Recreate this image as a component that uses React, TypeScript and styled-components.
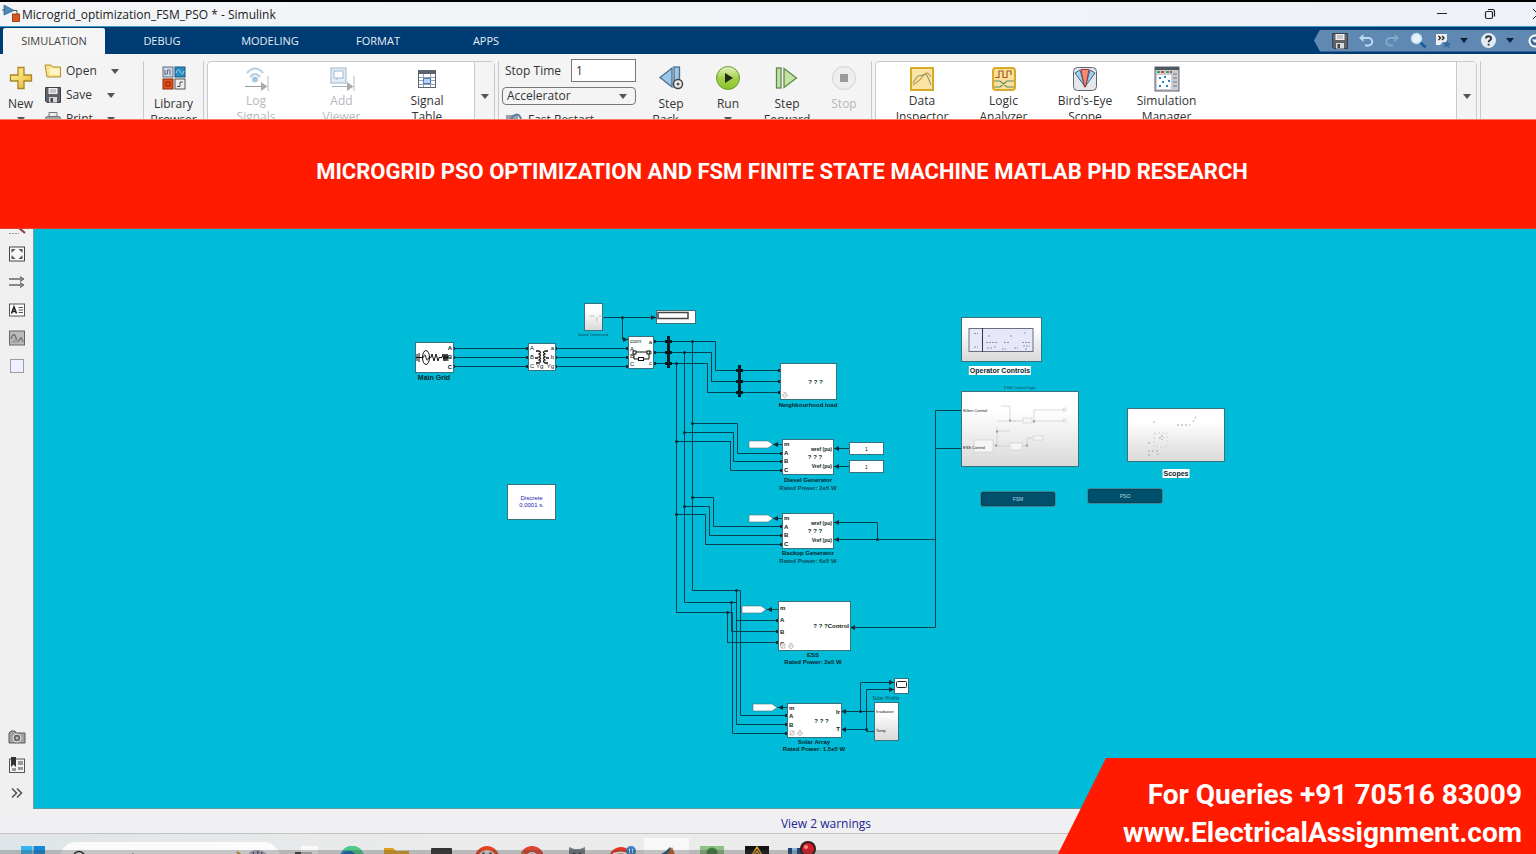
import React from "react";
import styled, { createGlobalStyle } from "styled-components";

/* ---------- model data ---------- */

const ORIGIN = { x: 34, y: 229 };

const WIRES = [
	"M454 348H528M454 357H528M454 366H528M556 348H628M556 357H628M556 366H628",
	"M603 317H656M622 317V339H628",
	"M654 341H715V370H780M654 352H711V381H780M654 363H707V392H780",
	"M692 341V590M684 352V602M676 363V612",
	"M692 423H737V453H782M684 432H733V461H782M676 441H730V470H782",
	"M692 497H713V526H782M684 506H709V535H782M676 514H705V544H782",
	"M692 590H740V715H787M736 590V620H778",
	"M684 602H736V724H787M731 602V631H778",
	"M676 612H732V733H787M727 612V642H778",
	"M771 444H782M771 518H782M766 609H778M777 707H787",
	"M834 448H850M834 466H850M834 522H877V539M834 539H935",
	"M961 410H935V627H850M935 448H961",
	"M841 711H874M860 711V682H894M841 729H866V689H894M866 731H874",
];

const JUNCTIONS = [
	[622, 317], [692, 341], [684, 352], [676, 363], [692, 423], [684, 432], [676, 441],
	[692, 497], [684, 506], [676, 514], [736, 590], [731, 602], [727, 612], [877, 539],
	[860, 711], [866, 729],
];

const ARROWS_LEFT = [
	[834, 448], [834, 466], [834, 522], [834, 539], [850, 627], [841, 711], [841, 729],
	[773, 444], [773, 518], [767, 609], [778, 707],
];

const ARROWS_RIGHT = [[656, 317], [628, 339], [894, 682], [894, 689]];

const PORTS = [
	[454, 348], [454, 357], [454, 366], [528, 348], [528, 357], [528, 366],
	[556, 348], [556, 357], [556, 366], [628, 348], [628, 357], [628, 366],
	[655, 341], [655, 352], [655, 363], [780, 370], [780, 381], [780, 392],
	[782, 453], [782, 461], [782, 470], [782, 526], [782, 535], [782, 544],
	[778, 620], [778, 631], [778, 642], [787, 715], [787, 724], [787, 733],
];

const TERMINATORS = [[749, 444], [749, 518], [742, 609], [753, 707]];

const PHASES = ["m", "A", "B", "C"];

/* ---------- page ---------- */

export default function App() {
	return (
		<>
			<GlobalStyle />
			<Page>
				<TitleBar />
				<TabBar />
				<Toolstrip />
				<Banner>
					<h1>MICROGRID PSO OPTIMIZATION AND FSM FINITE STATE MACHINE MATLAB PHD RESEARCH</h1>
				</Banner>
				<Workspace>
					<Palette />
					<Model />
				</Workspace>
				<StatusBar>
					<a href="#warnings">View 2 warnings</a>
				</StatusBar>
				<Taskbar />
				<Contact>
					<p>For Queries +91 70516 83009</p>
					<p>www.ElectricalAssignment.com</p>
				</Contact>
			</Page>
		</>
	);
}

function TitleBar() {
	return (
		<StyledTitleBar>
			<svg width="18" height="18" viewBox="0 0 18 18">
				<path d="M2 0L12 5.5 2 10z" fill="#4d8db8" stroke="#2b6690" strokeWidth=".8" />
				<path d="M0 5H3M12 5.500H15V9" fill="none" stroke="#555" />
				<rect x="10.500" y="9" width="7" height="7.500" fill="#d9541e" stroke="#8b3210" strokeWidth=".8" />
			</svg>
			<span>Microgrid_optimization_FSM_PSO * - Simulink</span>
			<WindowButtons>
				<button aria-label="Minimize">
					<svg width="12" height="12" viewBox="0 0 12 12"><path d="M1 5.500H11" stroke="#222" /></svg>
				</button>
				<button aria-label="Restore">
					<svg width="12" height="12" viewBox="0 0 12 12" fill="none" stroke="#222" strokeWidth="1.200">
						<rect x="1.500" y="3.500" width="7" height="7" rx="1.500" />
						<path d="M4 1.500H8.500A2 2 0 0 1 10.500 3.500V8.500" />
					</svg>
				</button>
				<button aria-label="Close">
					<svg width="12" height="12" viewBox="0 0 12 12"><path d="M1 1L11 11M11 1L1 11" stroke="#222" /></svg>
				</button>
			</WindowButtons>
		</StyledTitleBar>
	);
}

function TabBar() {
	return (
		<StyledTabBar>
			<Tab $active $width={102}>SIMULATION</Tab>
			<Tab $width={114}>DEBUG</Tab>
			<Tab $width={102}>MODELING</Tab>
			<Tab $width={114}>FORMAT</Tab>
			<Tab $width={102}>APPS</Tab>
			<QuickAccess>
				<QuickButton $width={27} aria-label="Save"><FloppyIcon /></QuickButton>
				<QuickButton $width={26} aria-label="Undo">
					<svg width="16" height="16" viewBox="0 0 16 16" fill="none">
						<path d="M4 5H10.500A3.500 3.500 0 0 1 10.500 12.500H7" stroke="#b9dcf2" strokeWidth="2" />
						<path d="M5.500 1V9L1 5z" fill="#b9dcf2" />
					</svg>
				</QuickButton>
				<QuickButton $width={26} aria-label="Redo">
					<svg width="16" height="16" viewBox="0 0 16 16" fill="none">
						<path d="M12 5H6A3.500 3.500 0 0 0 6 12.500H9" stroke="#83a9c8" strokeWidth="2" />
						<path d="M10.500 1V9L15 5z" fill="#83a9c8" />
					</svg>
				</QuickButton>
				<QuickButton $width={27} aria-label="Search">
					<svg width="17" height="17" viewBox="0 0 17 17">
						<path d="M10 10L15.500 15.500" stroke="#1d5c9c" strokeWidth="2.500" />
						<circle cx="6.500" cy="6.500" r="5" fill="#e6f2fa" stroke="#c2ddee" strokeWidth="1.500" />
					</svg>
				</QuickButton>
				<QuickButton $width={22} aria-label="Shortcuts">
					<svg width="16" height="16" viewBox="0 0 16 16">
						<path d="M1 1H12V9H8L5 12H1z" fill="#eee" />
						<path d="M3.500 3L5.500 5 3.500 7M7 3L9 5 7 7" fill="none" stroke="#222" strokeWidth="1.300" />
						<path d="M12 7L13.300 10H16L14 12L15 15L12 13.500L9 15L10 12L8 10H10.700z" fill="#37699c" />
					</svg>
				</QuickButton>
				<QuickButton $width={19} aria-label="More shortcuts"><Caret $color="#0d2238" /></QuickButton>
				<QuickButton $width={30} aria-label="Help">
					<svg width="17" height="17" viewBox="0 0 17 17">
						<circle cx="8.500" cy="8.500" r="7.500" fill="#e4eaf0" />
						<path d="M6 6.500C6 3.500 11.200 3.500 11.200 6.400C11.200 8.300 8.600 8.300 8.600 10.300M8.600 11.800V13.500" fill="none" stroke="#26333f" strokeWidth="1.800" />
					</svg>
				</QuickButton>
				<QuickButton $width={13} aria-label="More help"><Caret $color="#0d2238" /></QuickButton>
				<QuickButton $width={37} aria-label="Minimize toolstrip">
					<svg width="14" height="14" viewBox="0 0 14 14">
						<circle cx="7" cy="7" r="5.500" fill="#3f6e9d" stroke="#fff" strokeWidth="2" />
						<path d="M4 5.500H10L7 9z" fill="#fff" />
					</svg>
				</QuickButton>
			</QuickAccess>
		</StyledTabBar>
	);
}

function Toolstrip() {
	return (
		<StyledToolstrip>
			<Tool $width={41}>
				<svg width="24" height="24" viewBox="0 0 24 24">
					<path d="M9 1.500H15V9H22.500V15H15V22.500H9V15H1.500V9H9z" fill="url(#gold)" stroke="#a98526" strokeWidth="1.300" />
					<defs>
						<linearGradient id="gold" x1="0" y1="0" x2="1" y2="1">
							<stop offset="0" stopColor="#fff4a8" />
							<stop offset="1" stopColor="#e9b82b" />
						</linearGradient>
					</defs>
				</svg>
				<span>New</span>
				<Caret />
			</Tool>
			<FileMenu>
				<FileButton $label={45}><FolderIcon /><span>Open</span><Caret /></FileButton>
				<FileButton $label={41}><FloppyIcon /><span>Save</span><Caret /></FileButton>
				<FileButton $label={41}><PrinterIcon /><span>Print</span><Caret /></FileButton>
			</FileMenu>
			<Separator />
			<Tool $width={53}>
				<svg width="24" height="24" viewBox="0 0 24 24">
					<rect x="1" y="1" width="10" height="10" fill="#cfd5e6" stroke="#626a7e" />
					<path d="M3 9V4M3 8H5.500V4H8V9" fill="none" stroke="#626a7e" />
					<rect x="13" y="1" width="10" height="10" fill="#2b8cc0" stroke="#17567c" />
					<path d="M14 7C16 2 17.500 4 18.500 6S21 9 22 5" fill="none" stroke="#a7dcf4" />
					<rect x="1" y="13" width="10" height="10" fill="#e2511c" stroke="#8c2d0b" />
					<rect x="4" y="16" width="4" height="4" fill="none" stroke="#8c2d0b" />
					<rect x="13" y="13" width="10" height="10" fill="#eee" stroke="#555" />
					<path d="M15 20.500H18V16H21" fill="none" stroke="#555" />
				</svg>
				<span>Library<br />Browser</span>
			</Tool>
			<Separator />
			<Gallery>
				<Tool $width={86} $compact disabled>
					<svg width="26" height="26" viewBox="0 0 26 26" fill="none">
						<path d="M4 7Q12 -2 20 7M7 11Q12 5 17 11" stroke="#b5cfe0" strokeWidth="2" />
						<circle cx="12" cy="13.500" r="3" fill="#a6c7de" />
						<path d="M2 20.500H18" stroke="#999" />
						<path d="M18 16L24.500 20.500L18 25z" fill="#aaa" />
						<path d="M25 10V25" stroke="#bbb" />
					</svg>
					<span>Log<br />Signals</span>
				</Tool>
				<Tool $width={85} $compact disabled>
					<svg width="26" height="26" viewBox="0 0 26 26" fill="none">
						<rect x="2" y="2" width="15" height="15" fill="#e5eef7" stroke="#9cb8cf" />
						<rect x="5" y="5" width="9" height="7" fill="#fff" stroke="#9cb8cf" />
						<path d="M8 12V14M3 20.500H18" stroke="#a5b5c2" />
						<path d="M18 16L24.500 20.500L18 25z" fill="#aaa" />
						<path d="M25 10V25" stroke="#bbb" />
					</svg>
					<span>Add<br />Viewer</span>
				</Tool>
				<Tool $width={86} $compact>
					<svg width="20" height="26" viewBox="0 0 20 26">
						<rect x="1.500" y="4.500" width="17" height="17" fill="#fff" stroke="#5c6470" />
						<rect x="1" y="4" width="18" height="4" fill="#5c6470" />
						<path d="M2 11.500H18M2 14.500H18M2 18.500H18M6.500 8V21M13.500 8V21" stroke="#92a0b0" />
						<rect x="6.500" y="12.500" width="7" height="5" fill="#b6d2f5" stroke="#4b7cc0" />
					</svg>
					<span>Signal<br />Table</span>
				</Tool>
				<MoreButton aria-label="More prepare tools"><Caret /></MoreButton>
			</Gallery>
			<Separator />
			<Settings>
				<div>
					<label htmlFor="stop">Stop Time</label>
					<input id="stop" defaultValue="1" />
				</div>
				<SelectBox>
					<select aria-label="Simulation mode" defaultValue="Accelerator">
						<option>Accelerator</option>
					</select>
					<Caret />
				</SelectBox>
				<FastRestart>
					<svg width="18" height="14" viewBox="0 0 18 14">
						<rect x="1" y="2" width="12" height="10" fill="#9aa0aa" />
						<path d="M6 7C8 0 14 0 16 6" fill="none" stroke="#5d7ea4" strokeWidth="2" />
					</svg>
					Fast Restart
				</FastRestart>
			</Settings>
			<Tool $width={62}>
				<svg width="26" height="26" viewBox="0 0 26 26">
					<path d="M2 12.500L14 3V22z" fill="#9cc6e8" stroke="#4d6e8b" strokeWidth="1.300" />
					<rect x="16" y="2" width="5.500" height="20" fill="#9cc6e8" stroke="#4d6e8b" strokeWidth="1.300" />
					<circle cx="20" cy="19" r="4.500" fill="#eee" stroke="#444" strokeWidth="1.500" />
					<circle cx="20" cy="19" r="1.500" fill="#555" />
				</svg>
				<span>Step<br />Back <Caret /></span>
			</Tool>
			<Tool $width={52}>
				<svg width="26" height="26" viewBox="0 0 26 26">
					<circle cx="13" cy="13" r="11.500" fill="url(#run)" stroke="#6c9a37" />
					<path d="M10 8L18 13L10 18z" fill="#1e2b14" />
					<defs>
						<linearGradient id="run" x1="0" y1="0" x2="0" y2="1">
							<stop offset="0" stopColor="#e6f3c8" />
							<stop offset=".5" stopColor="#a5d14b" />
							<stop offset="1" stopColor="#8cc22e" />
						</linearGradient>
					</defs>
				</svg>
				<span>Run</span>
				<Caret />
			</Tool>
			<Tool $width={66}>
				<svg width="26" height="26" viewBox="0 0 26 26">
					<rect x="2.500" y="3" width="4.500" height="20" fill="#c3e3a5" stroke="#5d8a4a" strokeWidth="1.300" />
					<path d="M10 3.500L22.500 13L10 22.500z" fill="#c3e3a5" stroke="#5d8a4a" strokeWidth="1.300" />
				</svg>
				<span>Step<br />Forward</span>
			</Tool>
			<Tool $width={48} disabled>
				<svg width="26" height="26" viewBox="0 0 26 26">
					<circle cx="13" cy="13" r="11.500" fill="#eee" stroke="#d2d2d2" />
					<rect x="9" y="9" width="8" height="8" fill="#9b9b9b" />
				</svg>
				<span>Stop</span>
			</Tool>
			<Separator />
			<Gallery $grow>
				<Tool $width={82} $compact>
					<svg width="26" height="26" viewBox="0 0 26 26">
						<rect x="2" y="2" width="22" height="22" fill="#fbe5a4" stroke="#d9a928" strokeWidth="2" />
						<path d="M4 17C10 6 11 11 14 9S18 8 22 19" fill="none" stroke="#8d9e72" strokeWidth="1.200" />
						<path d="M4 19C8 16 11 15 14 10S20 7 22 11" fill="none" stroke="#c49a4a" strokeWidth="1.200" />
					</svg>
					<span>Data<br />Inspector</span>
				</Tool>
				<Tool $width={81} $compact>
					<svg width="26" height="26" viewBox="0 0 26 26">
						<rect x="2" y="2" width="22" height="22" rx="3" fill="#fbe09a" stroke="#d9a928" strokeWidth="2" />
						<path d="M4 11.500H8V5H12V11.500H16V5H20V9" fill="none" stroke="#a5582d" strokeWidth="1.200" />
						<path d="M3 15H9L16 21H23M3 21H9L16 15H23" fill="none" stroke="#5c8c6c" strokeWidth="1.200" />
					</svg>
					<span>Logic<br />Analyzer</span>
				</Tool>
				<Tool $width={82} $compact>
					<svg width="26" height="26" viewBox="0 0 26 26">
						<rect x="1.500" y="1.500" width="23" height="23" rx="4" fill="#e4e7ec" stroke="#5f6672" />
						<path d="M3 7L8 4L12.500 20z" fill="#9fd0ee" stroke="#33678c" />
						<path d="M23 7L18 4L13.500 20z" fill="#9fd0ee" stroke="#33678c" />
						<path d="M9 3.500H17L13.500 21H12.500z" fill="#f08c78" stroke="#a6332c" />
					</svg>
					<span>Bird's-Eye<br />Scope</span>
				</Tool>
				<Tool $width={81} $compact>
					<svg width="26" height="26" viewBox="0 0 26 26">
						<rect x="1" y="1" width="24" height="24" fill="#c9ccd0" stroke="#5c636b" />
						<rect x="1" y="1" width="24" height="3" fill="#4f5962" />
						<path d="M3 6H6M12 6H15" stroke="#3ba95c" strokeWidth="2" />
						<path d="M7 6H10M16 6H18" stroke="#cf4747" strokeWidth="2" />
						<rect x="3" y="9" width="14" height="14" fill="#fff" />
						<path d="M5 11h2v2h-2zM10 10h2v2h-2zM14 14h2v2h-2zM8 15h2v2h-2zM5 19h2v2h-2zM12 19h2v2h-2z" fill="#2781c4" />
						<path d="M19 8H23M19 12H23M19 16H23M19 20H23" stroke="#777" />
					</svg>
					<span>Simulation<br />Manager</span>
				</Tool>
				<MoreButton aria-label="More review tools"><Caret /></MoreButton>
			</Gallery>
			<Separator />
		</StyledToolstrip>
	);
}

function FolderIcon() {
	return (
		<svg width="18" height="16" viewBox="0 0 18 16">
			<path d="M1 2H7L9 4H16.500V14H3z" fill="#f9e088" stroke="#b08e32" />
			<path d="M5 5.500H15.500V12H6z" fill="#fff6c8" />
		</svg>
	);
}

function FloppyIcon() {
	return (
		<svg width="18" height="18" viewBox="0 0 18 18">
			<path d="M1.500 1.500H16.500V16.500H3L1.500 15z" fill="#5f6369" stroke="#3e4146" />
			<rect x="4.500" y="2" width="9" height="6" fill="#f0f0f0" />
			<path d="M6 4H12M6 6H12" stroke="#999" />
			<rect x="5" y="11" width="8" height="5.500" fill="#d8d8d8" />
			<rect x="6.500" y="12" width="2.500" height="4" fill="#444" />
		</svg>
	);
}

function PrinterIcon() {
	return (
		<svg width="18" height="16" viewBox="0 0 18 16">
			<path d="M5 6V1.500H13V6" fill="#eee" stroke="#777" />
			<rect x="1.500" y="5.500" width="15" height="8" rx="2" fill="#a3a6aa" stroke="#6c6f73" />
		</svg>
	);
}

function Palette() {
	return (
		<StyledPalette>
			<div>
				<PaletteButton $clipped aria-label="Zoom">
					<svg width="18" height="18" viewBox="0 0 18 18"><path d="M1 16.500H11" stroke="#999" strokeDasharray="2 1" /><path d="M11 11L17 16" stroke="#8b3a32" strokeWidth="2" /></svg>
				</PaletteButton>
				<PaletteButton aria-label="Fit to view">
					<svg width="18" height="18" viewBox="0 0 18 18">
						<rect x="1.500" y="2" width="15" height="14" fill="#fafafa" stroke="#444" />
						<path d="M3.500 4H7.500L3.500 8zM14.500 4H10.500L14.500 8zM3.500 14H7.500L3.500 10zM14.500 14H10.500L14.500 10z" fill="#555" />
					</svg>
				</PaletteButton>
				<PaletteButton aria-label="Signal routing">
					<svg width="18" height="18" viewBox="0 0 18 18">
						<path d="M1 6H14M1 12H14" stroke="#666" strokeWidth="1.300" />
						<path d="M12 3.500L16 6L12 8.500M12 9.500L16 12L12 14.500" fill="#888" stroke="#666" />
					</svg>
				</PaletteButton>
				<PaletteButton aria-label="Annotation">
					<svg width="18" height="18" viewBox="0 0 18 18">
						<rect x="1.500" y="3" width="15" height="12" fill="#fff" stroke="#555" />
						<path d="M3.500 12.500L6 6L8.500 12.500M4.500 10.500H7.500" fill="none" stroke="#222" strokeWidth="1.600" />
						<path d="M10.500 6.500H15M10.500 9H15M10.500 11.500H15" stroke="#555" />
					</svg>
				</PaletteButton>
				<PaletteButton aria-label="Image">
					<svg width="18" height="18" viewBox="0 0 18 18">
						<rect x="1.500" y="2" width="15" height="14" fill="#bbb" stroke="#666" />
						<path d="M3 10C5 4 7 5 8 9S11 13 12 10S14 10 15 13" fill="none" stroke="#6f6f6f" strokeWidth="1.300" />
						<path d="M3 14L7 9L12 14z" fill="#a2a2a2" />
					</svg>
				</PaletteButton>
				<PaletteButton aria-label="Area">
					<svg width="18" height="18" viewBox="0 0 18 18"><rect x="2.500" y="2.500" width="13" height="13" fill="#eef0ff" stroke="#9a9cab" /></svg>
				</PaletteButton>
			</div>
			<div>
				<PaletteButton aria-label="Screenshot">
					<svg width="18" height="18" viewBox="0 0 18 18">
						<path d="M1 5L3 3H7L8 5H17V15H1z" fill="#a2a2a2" stroke="#5a5a5a" />
						<circle cx="9" cy="10" r="4" fill="#666" stroke="#eee" />
						<circle cx="9" cy="10" r="1.500" fill="#bbb" />
					</svg>
				</PaletteButton>
				<PaletteButton aria-label="Bookmarks">
					<svg width="18" height="18" viewBox="0 0 18 18">
						<rect x="1.500" y="3" width="15" height="13.500" fill="#f2f2f2" stroke="#555" />
						<path d="M3 1H8V11L5.500 8.500L3 11z" fill="#333" />
						<path d="M10 5h5v4h-5zM10 11h5v3h-5zM4 12h4v3h-4z" fill="#999" />
					</svg>
				</PaletteButton>
				<PaletteButton aria-label="Show more">
					<svg width="18" height="18" viewBox="0 0 18 18"><path d="M4 4.500L8.500 9L4 13.500M9 4.500L13.500 9L9 13.500" fill="none" stroke="#555" strokeWidth="1.600" /></svg>
				</PaletteButton>
			</div>
		</StyledPalette>
	);
}

function Model() {
	return (
		<Canvas>
			<Wires viewBox="34 229 1502 580" width="1502" height="580">
				<g fill="none" stroke="#06404e" strokeWidth="1" transform="translate(.5 .5)">
					{WIRES.map((d) => <path key={d} d={d} />)}
				</g>
				<g fill="#032c36">
					{JUNCTIONS.map(([x, y]) => <circle key={`${x}-${y}`} cx={x + 0.5} cy={y + 0.5} r="1.500" />)}
					{ARROWS_LEFT.map(([x, y]) => <path key={`${x}-${y}`} d={`M${x} ${y + 0.5}l5 -2.500v5z`} />)}
					{ARROWS_RIGHT.map(([x, y]) => <path key={`${x}-${y}`} d={`M${x} ${y + 0.5}l-5 -2.500v5z`} />)}
					{PORTS.map(([x, y]) => <rect key={`${x}-${y}`} x={x - 2} y={y - 1} width="3" height="3" />)}
				</g>
				<g fill="#fff" stroke="#467580" strokeWidth=".6">
					{TERMINATORS.map(([x, y]) => <path key={y} d={`M${x} ${y - 3}h19l5 3.500l-5 3.500h-19z`} />)}
				</g>
				<path d="M668.500 336V368M739.500 365V397" stroke="#02191f" strokeWidth="3" />
				<path d="M665 341.500H672M665 352.500H672M665 363.500H672M736 370.500H743M736 381.500H743M736 392.500H743" stroke="#02191f" strokeWidth="3" />
			</Wires>

			<Block $x={415} $y={342} $w={39} $h={31}>
				<svg width="37" height="29" viewBox="0 0 37 29" fill="none" stroke="#111">
					<path d="M0 14.500H7M1 11V18M3 10V19M13 14.500H15L16 11L18 18L20 11L22 18L23 14.500H26L27 11L28 18L29 11L30 18L31 11L32 18" />
					<ellipse cx="10" cy="14.500" rx="3.500" ry="7" />
					<path d="M7.500 14.500Q9 9 10 14.500T12.500 14.500" />
				</svg>
				<Ports $side="right"><b>A</b><b>B</b><b>C</b></Ports>
			</Block>
			<Caption $x={434} $y={373} $size={7}>Main Grid</Caption>

			<Block $x={528} $y={343} $w={28} $h={28}>
				<svg width="26" height="26" viewBox="0 0 26 26" fill="none" stroke="#111" strokeWidth="1.300">
					<path d="M6 14H9M20 14H17M7 7H10Q13 8 10 10Q13 11 10 13Q13 14 10 16Q13 17 10 19H7M19 7H16Q13 8 16 10Q13 11 16 13Q13 14 16 16Q13 17 16 19H19" />
				</svg>
				<Ports $side="left"><span>A</span><span>B</span><span>C Yg</span></Ports>
				<Ports $side="right"><span>a</span><span>b</span><span>Yg</span></Ports>
			</Block>

			<Block $x={628} $y={336} $w={26} $h={33}>
				<svg width="24" height="31" viewBox="0 0 24 31" fill="none" stroke="#111">
					<path d="M5 17V22H10M15 22H20V17M6 15H19" />
					<rect x="4" y="14" width="3" height="3" fill="#fff" />
					<rect x="18" y="14" width="3" height="3" fill="#fff" />
					<rect x="9.500" y="20.500" width="5" height="3" fill="#fff" />
				</svg>
				<Ports $side="left"><span>com</span><span>A</span><span>B</span><span>C</span></Ports>
				<Ports $side="right"><span>a</span><span>b</span><span>c</span></Ports>
			</Block>

			<Block $x={584} $y={303} $w={19} $h={28} $shaded>
				<svg width="17" height="26" viewBox="0 0 17 26" fill="none" stroke="#bbb">
					<path d="M5 12H9M12 13V17M14 12H16" />
				</svg>
			</Block>
			<Caption $x={593} $y={332} $size={4} $light>Island Command</Caption>
			<Block $x={656} $y={310} $w={40} $h={14}>
				<svg width="38" height="12" viewBox="0 0 38 12"><rect x="1" y="1.500" width="30" height="6" fill="#fff" stroke="#444" strokeWidth="1.500" /></svg>
			</Block>

			<Block $x={780} $y={363} $w={57} $h={37}>
				<Mask $shift={14}>? ? ?</Mask>
				<Badge><DownIcon /></Badge>
			</Block>
			<Caption $x={808} $y={401} $size={6}>Neighbourhood load</Caption>

			<Machine y={439} />
			<Caption $x={808} $y={476} $size={6}>Diesel Generator</Caption>
			<Caption $x={808} $y={484} $size={6} $light>Rated Power: 2e5 W</Caption>
			<Block $x={849} $y={442} $w={35} $h={13}><Constant>1</Constant></Block>
			<Block $x={849} $y={460} $w={35} $h={13}><Constant>1</Constant></Block>

			<Machine y={513} />
			<Caption $x={808} $y={549} $size={6}>Backup Generator</Caption>
			<Caption $x={808} $y={557} $size={6} $light>Rated Power: 6e5 W</Caption>

			<Block $x={778} $y={601} $w={73} $h={50}>
				<Ports $side="left">{PHASES.map((p) => <b key={p}>{p}</b>)}</Ports>
				<Mask $shift={12}>? ? ?</Mask>
				<Ports $side="right"><b>Control</b></Ports>
				<Badge><LinkIcon /><DownIcon /></Badge>
			</Block>
			<Caption $x={813} $y={651} $size={6}>ESS</Caption>
			<Caption $x={813} $y={658} $size={6}>Rated Power: 2e5 W</Caption>

			<Block $x={787} $y={703} $w={55} $h={35}>
				<Ports $side="left">{PHASES.slice(0, 3).map((p) => <b key={p}>{p}</b>)}<b>&nbsp;</b></Ports>
				<Mask $shift={14}>? ? ?</Mask>
				<Ports $side="right"><b>Ir</b><b>T</b></Ports>
				<Badge><LinkIcon /><DownIcon /></Badge>
			</Block>
			<Caption $x={814} $y={738} $size={6}>Solar Array</Caption>
			<Caption $x={814} $y={745} $size={6}>Rated Power: 1.5e5 W</Caption>

			<Block $x={894} $y={678} $w={15} $h={16}>
				<svg width="13" height="14" viewBox="0 0 13 14"><rect x="1.500" y="2.500" width="10" height="6" rx="1" fill="#fff" stroke="#222" /></svg>
			</Block>
			<Caption $x={886} $y={695} $size={5} $light>Solar Profile</Caption>
			<Block $x={874} $y={702} $w={25} $h={39} $shaded>
				<Ports $side="left" $small><span>Irradiation</span><span>Temp</span></Ports>
			</Block>

			<Block $x={507} $y={484} $w={49} $h={36}>
				<Discrete>Discrete<br />0.0001 s.</Discrete>
			</Block>

			<Block $x={961} $y={317} $w={81} $h={45} $shaded>
				<svg width="79" height="43" viewBox="0 0 79 43" fill="none">
					<rect x="7" y="10.500" width="64" height="23" fill="#e6e8fa" stroke="#6b6d80" />
					<path d="M20.500 10V34" stroke="#333" />
					<path d="M12 15.500H16M12 29H16M24 24.500H35M42 24.500H48M60 24.500H68M26 18H29M48 18H51M62 15.500L64 14M25 30H30M33 28V31M40 31H44M52 30H56M61 28H68M63 31H66" stroke="#8d90a8" strokeDasharray="2 1" />
				</svg>
			</Block>
			<Caption $x={1000} $y={366} $size={7} $boxed>Operator Controls</Caption>

			<Caption $x={1020} $y={385} $size={4} $light>FSM Control logic</Caption>
			<Block $x={961} $y={391} $w={118} $h={76} $shaded>
				<svg width="116" height="74" viewBox="0 0 116 74" fill="none" stroke="#c4c4c4">
					<path d="M39 14H48V29H103M72 29V18H103M35 29H54M35 35V54M35 39H48M35 54H47M60 54H65V46H70" strokeWidth=".6" />
					<path d="M47 28.500H49M34 39.500H36M33 53.500H35M71 29.500H73M64 53.500H66" stroke="#999" strokeWidth="2" />
					<g fill="#f5f5f5" strokeWidth=".5">
						<rect x="61" y="26" width="9" height="5" />
						<rect x="101" y="16" width="3" height="3" />
						<rect x="101" y="27" width="3" height="3" />
						<rect x="12" y="48" width="19" height="12" />
						<rect x="48" y="51" width="12" height="7" />
						<rect x="71" y="44" width="10" height="4" />
					</g>
				</svg>
				<Ports $side="left" $small><span>BGen Control</span><span>ESS Control</span></Ports>
			</Block>

			<Block $x={1127} $y={408} $w={98} $h={54} $shaded>
				<svg width="96" height="52" viewBox="0 0 96 52" fill="none" stroke="#a5a5a5" strokeDasharray="2 2">
					<path d="M25 13H28M49 16H62M65 13L69 6M20 34H24M31 29H36M34 26V31M20 42H26M20 46H23M28 42H32M29 46L31 44" />
					<rect x="26" y="24" width="13" height="14" stroke="#d2d2d2" />
				</svg>
			</Block>
			<Caption $x={1176} $y={469} $size={7} $boxed>Scopes</Caption>

			<ModelButton $x={980} $y={491}>FSM</ModelButton>
			<ModelButton $x={1087} $y={488}>PSO</ModelButton>
		</Canvas>
	);
}

function Machine({ y }: { y: number }) {
	return (
		<Block $x={782} $y={y} $w={52} $h={36}>
			<Ports $side="left">{PHASES.map((p) => <b key={p}>{p}</b>)}</Ports>
			<Mask $shift={14}>? ? ?</Mask>
			<Ports $side="right" $medium><b>wref (pu)</b><b>Vref (pu)</b></Ports>
		</Block>
	);
}

function DownIcon() {
	return <svg width="6" height="6" viewBox="0 0 6 6"><path d="M2 0H4V3H6L3 6L0 3H2z" fill="#eee" stroke="#999" strokeWidth=".5" /></svg>;
}

function LinkIcon() {
	return <svg width="6" height="6" viewBox="0 0 6 6"><path d="M1 1H5V5H1zM1 5L5 1" fill="#fff" stroke="#a99" strokeWidth=".6" /></svg>;
}

function Taskbar() {
	return (
		<StyledTaskbar>
			<TaskButton $width={60} aria-label="Start">
				<svg width="24" height="24" viewBox="0 0 24 24"><path d="M0 0H11.500V11.500H0z" fill="#35b4ee" /><path d="M12.500 0H24V11.500H12.500z" fill="#1287d8" /></svg>
			</TaskButton>
			<SearchBox>
				<svg width="16" height="16" viewBox="0 0 16 16"><circle cx="7" cy="7" r="5.500" fill="none" stroke="#222" strokeWidth="1.500" /><path d="M11 11L15 15" stroke="#222" strokeWidth="1.500" /></svg>
				<input aria-label="Search" placeholder="Search" />
				<svg width="34" height="16" viewBox="0 0 34 16">
					<path d="M1 2L6 6" stroke="#c2891a" strokeWidth="2" />
					<path d="M11 9C11 2 17 0 21 0C28 0 32 4 33 10V16H13z" fill="#b9b4cb" />
					<path d="M13 6L16 12M17 2L19 9M22 1L21 10M26 2L24 10M30 5L27 12" stroke="#4d4567" strokeWidth="1.300" />
				</svg>
			</SearchBox>
			<TaskButton aria-label="Task view">
				<svg width="24" height="24" viewBox="0 0 24 24"><rect x="6" y="0" width="17" height="15" fill="#fafafa" /><rect x="0" y="6" width="17" height="15" fill="#3a3a3a" /><rect x="6" y="6" width="11" height="12" fill="#b9b9b9" /></svg>
			</TaskButton>
			<TaskButton aria-label="Edge">
				<svg width="24" height="24" viewBox="0 0 24 24"><circle cx="12" cy="12" r="12" fill="#1c87cf" /><path d="M2 6C7 -3 23 -2 24 11H15C15 6 8 3 2 6z" fill="#4dca85" /><ellipse cx="9" cy="9" rx="6" ry="4" fill="#1165b5" /></svg>
			</TaskButton>
			<TaskButton aria-label="File Explorer">
				<svg width="25" height="24" viewBox="0 0 25 24"><path d="M0 2H9L12 5H25V24H0z" fill="#e3a21b" /><path d="M0 8H25V24H0z" fill="#cc9429" /></svg>
			</TaskButton>
			<TaskButton aria-label="Terminal">
				<svg width="22" height="24" viewBox="0 0 22 24"><rect y="2" width="21" height="20" rx="1" fill="#333" /></svg>
			</TaskButton>
			<TaskButton aria-label="Assistant">
				<svg width="24" height="24" viewBox="0 0 24 24"><circle cx="12" cy="12" r="12" fill="#e5431f" /><ellipse cx="12" cy="10" rx="8" ry="6" fill="#f6e3d8" /><circle cx="8.500" cy="7.500" r="1.300" fill="#444" /><circle cx="15.500" cy="7.500" r="1.300" fill="#444" /></svg>
			</TaskButton>
			<TaskButton aria-label="Chrome">
				<svg width="24" height="24" viewBox="0 0 24 24"><circle cx="12" cy="12" r="12" fill="#de4232" /><path d="M0 12A12 12 0 0 1 2 6L9 12z" fill="#b3a43a" /><circle cx="12" cy="12" r="6" fill="#fff" /><circle cx="12" cy="12" r="4.500" fill="#4285f4" /></svg>
			</TaskButton>
			<TaskButton aria-label="Cat">
				<svg width="20" height="24" viewBox="0 0 20 24"><path d="M2 1L7 3H13L18 1V22H2z" fill="#737b84" /><circle cx="7" cy="8" r="1.500" fill="#333" /><circle cx="13" cy="8" r="1.500" fill="#333" /></svg>
			</TaskButton>
			<TaskButton aria-label="Browser">
				<svg width="28" height="26" viewBox="0 0 28 26"><circle cx="13" cy="13" r="12" fill="#e6341d" /><path d="M5 8Q13 5 20 8" stroke="#fff" strokeWidth="2" fill="none" /><circle cx="23" cy="5" r="5" fill="#397fc6" /><path d="M21.500 3V7M24.500 3V7" stroke="#dcecfb" /></svg>
			</TaskButton>
			<TaskButton $active aria-label="MATLAB">
				<svg width="24" height="24" viewBox="0 0 24 24"><path d="M0 12L11 5L15 1L22 16L24 24z" fill="#28567c" /><path d="M10 12L17 1L24 18V24z" fill="#cc5d22" /></svg>
			</TaskButton>
			<TaskButton aria-label="Chat">
				<svg width="24" height="24" viewBox="0 0 24 24"><rect width="24" height="22" fill="#8cc084" /><circle cx="12" cy="7" r="5.500" fill="#3e7e3b" /></svg>
			</TaskButton>
			<TaskButton aria-label="Simulator">
				<svg width="24" height="24" viewBox="0 0 24 24"><rect width="24" height="24" fill="#121212" /><path d="M12 1L17 9H7z M12 5L18 14H6z" fill="none" stroke="#d9a127" strokeWidth="1.500" /></svg>
			</TaskButton>
			<TaskButton $raised aria-label="Recorder">
				<svg width="28" height="30" viewBox="0 0 28 30"><rect y="7" width="18" height="20" fill="#223f75" /><rect x="4" y="7" width="5" height="10" fill="#8cb5de" /><circle cx="20" cy="8" r="8" fill="#30191b" /><circle cx="20" cy="8" r="6" fill="#d71e25" /><circle cx="18" cy="6" r="2" fill="#f68d8f" /></svg>
			</TaskButton>
		</StyledTaskbar>
	);
}

/* ---------- styles ---------- */

const GlobalStyle = createGlobalStyle`
	* {
		box-sizing: border-box;
	}

	body {
		margin: 0;
		font-family: "Open Sans", "Noto Sans", sans-serif;
		font-size: 12px;
		color: #333;
	}

	button, input, select {
		font: inherit;
		color: inherit;
	}

	button {
		padding: 0;
		border: 0;
		background: none;
	}

	svg {
		display: block;
		flex-shrink: 0;
	}
`;

const Page = styled.div`
	position: relative;
	display: flex;
	flex-direction: column;
	min-height: 100vh;
	overflow: hidden;
	background: #f0f0f2;
`;

const StyledTitleBar = styled.header`
	display: flex;
	align-items: center;
	gap: 2px;
	height: 26px;
	padding-left: 2px;
	border-top: 2px solid #000;
	background: linear-gradient(90deg, #f3f5f7, #eef2f8);
	color: #1b1b1b;
`;

const WindowButtons = styled.div`
	display: flex;
	margin: 0 -26px 0 auto;

	button {
		display: grid;
		place-items: center;
		width: 48px;
		height: 24px;
	}
`;

const StyledTabBar = styled.nav`
	display: flex;
	align-items: flex-end;
	height: 28px;
	padding-left: 3px;
	background: #003c74;
	border-top: 1px solid #3d9bc4;
`;

const Tab = styled.button<{ $active?: boolean; $width: number }>`
	width: ${(p) => p.$width}px;
	height: 26px;
	padding-bottom: 2px;
	border-radius: 2px 2px 0 0;
	font-size: 11px;
	background: ${(p) => (p.$active ? "#f5f5f5" : "transparent")};
	color: ${(p) => (p.$active ? "#444" : "#e6eef5")};
`;

const QuickAccess = styled.div`
	display: flex;
	align-self: center;
	width: 222px;
	height: 22px;
	margin-left: auto;
	padding-left: 12px;
	overflow: hidden;
	background: #5f89b3;
	clip-path: polygon(6px 0, 100% 0, 100% 100%, 6px 100%, 0 50%);
`;

const QuickButton = styled.button<{ $width: number }>`
	display: grid;
	place-items: center;
	flex: 0 0 ${(p) => p.$width}px;
`;

const Caret = styled.i<{ $color?: string }>`
	display: inline-block;
	width: 0;
	height: 0;
	border: 4px solid transparent;
	border-top: 5px solid ${(p) => p.$color || "#555"};
	border-bottom: 0;
`;

const StyledToolstrip = styled.section`
	display: flex;
	height: 65px;
	padding-top: 7px;
	overflow: hidden;
	background: #f4f4f4;
	line-height: 16px;
`;

const Tool = styled.button<{ $width: number; $compact?: boolean }>`
	display: flex;
	flex-direction: column;
	align-items: center;
	flex: 0 0 ${(p) => p.$width}px;
	gap: ${(p) => (p.$compact ? 1 : 5)}px;
	padding-top: 4px;
	line-height: 16px;
	white-space: nowrap;

	& > svg {
		height: 26px;
	}

	&:disabled {
		color: #b4b8bc;
	}
`;

const FileMenu = styled.div`
	display: flex;
	flex-direction: column;
	width: 99px;
	margin-top: -2px;
	padding-left: 3px;
`;

const FileButton = styled.button<{ $label: number }>`
	display: flex;
	align-items: center;
	flex: 0 0 24px;
	gap: 4px;

	span {
		width: ${(p) => p.$label - 4}px;
		text-align: left;
	}
`;

const Separator = styled.div`
	flex: 0 0 4px;
	margin-left: 3px;
	border-left: 1px solid #c9c9c9;
`;

const Gallery = styled.div<{ $grow?: boolean }>`
	display: flex;
	flex: ${(p) => (p.$grow ? "1 1 auto" : "0 0 288px")};
	max-width: ${(p) => (p.$grow ? "calc(100% - 934px)" : "none")};
	height: 90px;
	padding-left: 5px;
	border: 1px solid #c4ccd2;
	border-radius: 4px;
	background: #fff;
`;

const MoreButton = styled.button`
	display: flex;
	justify-content: center;
	width: 20px;
	margin-left: auto;
	padding-top: 32px;
	border-left: 1px solid #c4ccd2;
	background: #f4f4f4;
`;

const Settings = styled.div`
	display: flex;
	flex-direction: column;
	gap: 5px;
	width: 138px;

	& > div {
		display: flex;
		align-items: center;
		justify-content: space-between;
		width: 134px;
		margin-top: -2px;
		padding-left: 3px;
	}

	input {
		width: 65px;
		height: 23px;
		padding: 0 4px;
		border: 1px solid #777;
		background: #fff;
	}
`;

const SelectBox = styled.span`
	display: flex;
	align-items: center;
	width: 134px;
	height: 21px;
	padding-right: 8px;
	border: 1px solid #777;
	border-radius: 4px;

	select {
		flex: 1;
		padding-left: 4px;
		border: 0;
		outline: 0;
		background: none;
		appearance: none;
	}
`;

const FastRestart = styled.button`
	display: flex;
	align-items: center;
	gap: 5px;
	padding: 2px 0 0 3px;
`;

const Banner = styled.section`
	display: grid;
	place-items: center;
	height: 110px;
	padding: 0 0 6px 28px;
	border-top: 1px solid #ff7a66;
	border-bottom: 1px solid #d8482f;
	background: #ff1a00;

	h1 {
		margin: 0;
		font: bold 22px Roboto, sans-serif;
		color: #fff;
		white-space: nowrap;
	}
`;

const Workspace = styled.main`
	display: flex;
	flex: 1;
	min-height: 580px;
`;

const StyledPalette = styled.aside`
	display: flex;
	flex-direction: column;
	justify-content: space-between;
	width: 34px;
	padding-bottom: 2px;
	border-right: 1px solid #7b9ba3;
	background: #f0f0f0;
`;

const PaletteButton = styled.button<{ $clipped?: boolean }>`
	display: flex;
	align-items: ${(p) => (p.$clipped ? "flex-end" : "center")};
	justify-content: center;
	width: 100%;
	height: ${(p) => (p.$clipped ? 6 : 28)}px;
	margin-bottom: ${(p) => (p.$clipped ? 5 : 0)}px;
	overflow: hidden;
`;

const Canvas = styled.div`
	position: relative;
	flex: 1;
	overflow: hidden;
	border-bottom: 1px solid #5f9aa5;
	background: #00bcd8;
	font-family: "Liberation Sans", Arial, sans-serif;
	color: #0a1d22;
`;

const Wires = styled.svg`
	position: absolute;
	top: 0;
	left: 0;
`;

const Block = styled.div<{ $x: number; $y: number; $w: number; $h: number; $shaded?: boolean }>`
	position: absolute;
	left: ${(p) => p.$x - ORIGIN.x}px;
	top: ${(p) => p.$y - ORIGIN.y}px;
	display: grid;
	width: ${(p) => p.$w}px;
	height: ${(p) => p.$h}px;
	border: 1px solid #37727f;
	background: ${(p) => (p.$shaded ? "linear-gradient(#fff 25%, #d9d9d9)" : "#fff")};

	& > * {
		grid-area: 1 / 1;
	}
`;

const Ports = styled.div<{ $side: "left" | "right"; $small?: boolean; $medium?: boolean }>`
	display: flex;
	flex-direction: column;
	justify-content: space-around;
	justify-self: ${(p) => (p.$side === "left" ? "start" : "end")};
	padding: 0 1px;
	text-align: ${(p) => p.$side};
	font-size: ${(p) => (p.$small ? 4 : p.$medium ? 5 : 6)}px;
	line-height: 6px;
`;

const Mask = styled.span<{ $shift: number }>`
	place-self: center;
	padding-left: ${(p) => p.$shift}px;
	font-size: 6px;
	font-weight: bold;
	line-height: 8px;
`;

const Constant = styled.span`
	place-self: center;
	font-size: 5px;
	line-height: 8px;
`;

const Badge = styled.span`
	display: flex;
	gap: 2px;
	place-self: end start;
	padding: 1px;
`;

const Discrete = styled.span`
	place-self: center;
	font-size: 6px;
	line-height: 7px;
	text-align: center;
	color: #2222b0;
`;

const Caption = styled.span<{ $x: number; $y: number; $size: number; $light?: boolean; $boxed?: boolean }>`
	position: absolute;
	left: ${(p) => p.$x - ORIGIN.x}px;
	top: ${(p) => p.$y - ORIGIN.y}px;
	transform: translateX(-50%);
	padding: 0 ${(p) => (p.$boxed ? 1 : 0)}px;
	background: ${(p) => (p.$boxed ? "#fff" : "none")};
	color: ${(p) => (p.$light ? "#0a4c5a" : "#06252c")};
	font-size: ${(p) => p.$size}px;
	font-weight: ${(p) => (p.$size > 5 ? "bold" : "normal")};
	line-height: ${(p) => p.$size + 2}px;
	white-space: nowrap;
`;

const ModelButton = styled.button<{ $x: number; $y: number }>`
	position: absolute;
	left: ${(p) => p.$x - ORIGIN.x}px;
	top: ${(p) => p.$y - ORIGIN.y}px;
	width: 76px;
	height: 16px;
	border: 1px solid #3d8797;
	border-radius: 3px;
	background: #00506b;
	box-shadow: inset 0 0 2px #002c40;
	font-size: 5px;
	color: #b5dbe6;
`;

const StatusBar = styled.footer`
	display: grid;
	place-items: center;
	height: 24px;
	padding: 4px 0 0 116px;
	background: #f0f0f3;

	a {
		color: #24248c;
		text-decoration: none;
	}
`;

const StyledTaskbar = styled.nav`
	position: relative;
	display: flex;
	align-items: flex-start;
	height: 21px;
	padding-left: 3px;
	overflow: hidden;
	border-top: 1px solid #c3c3c3;
	background: linear-gradient(90deg, #dfe5e8, #ebebeb 30%);

	&::after {
		content: "";
		position: absolute;
		inset: auto 0 0;
		height: 4px;
		background: rgba(70, 70, 70, 0.3);
	}
`;

const TaskButton = styled.button<{ $width?: number; $active?: boolean; $raised?: boolean }>`
	display: flex;
	justify-content: center;
	flex: 0 0 ${(p) => p.$width || 45}px;
	height: 40px;
	margin-top: ${(p) => (p.$active ? 4 : 0)}px;
	padding-top: ${(p) => (p.$active ? 8 : p.$raised ? 7 : 12)}px;
	background: ${(p) => (p.$active ? "#f8f8f8" : "none")};
`;

const SearchBox = styled.label`
	display: flex;
	align-items: center;
	gap: 10px;
	width: 220px;
	height: 32px;
	margin: 8px 4px 0 -3px;
	padding: 0 10px 0 12px;
	border-radius: 16px;
	background: #fbfbfb;

	input {
		flex: 1;
		min-width: 0;
		padding: 0;
		border: 0;
		outline: 0;
		background: none;
		font-size: 13px;
	}
`;

const Contact = styled.address`
	position: absolute;
	right: 0;
	bottom: 0;
	width: 478px;
	height: 96px;
	padding: 18px 14px 0 0;
	background: #ff1a00;
	clip-path: polygon(48px 0, 100% 0, 100% 100%, 0 100%);
	font: bold 28px Roboto, sans-serif;
	color: #fff;
	text-align: right;
	white-space: nowrap;

	p {
		margin: 0;
		line-height: 38px;
	}
`;
